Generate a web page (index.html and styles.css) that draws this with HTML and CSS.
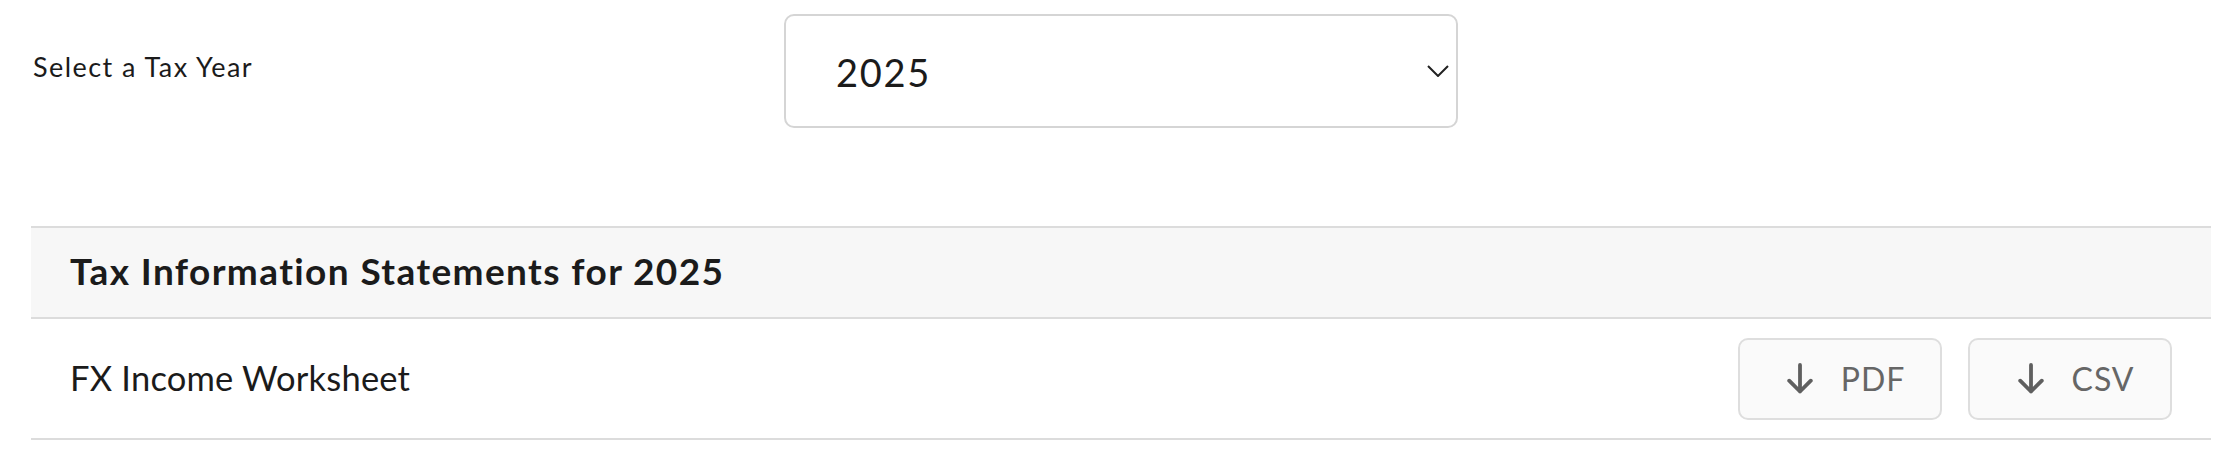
FILE: index.html
```html
<!DOCTYPE html>
<html>
<head>
<meta charset="utf-8">
<link rel="stylesheet" href="styles.css">
</head>
<body>
<div class="page">
  <div class="year-row">
    <div class="year-label">Select a Tax Year</div>
    <div class="select">
      <span class="select-value">2025</span>
      <svg class="chevron" width="22" height="12" viewBox="0 0 22 12"><path d="M1 1 L11 11 L21 1" fill="none" stroke="#222" stroke-width="2"/></svg>
    </div>
  </div>
  <div class="statements">
    <div class="statements-head">Tax Information Statements for 2025</div>
    <div class="statement-row">
      <div class="statement-name">FX Income Worksheet</div>
      <div class="actions">
        <button class="dl-btn"><svg class="dl-icon" width="26" height="31" viewBox="0 0 26 31"><path d="M13 2 V28.5 M2.2 17.7 L13 28.5 L23.8 17.7" fill="none" stroke="#5f5f5f" stroke-width="3.8" stroke-linecap="round" stroke-linejoin="round"/></svg><span>PDF</span></button>
        <button class="dl-btn"><svg class="dl-icon" width="26" height="31" viewBox="0 0 26 31"><path d="M13 2 V28.5 M2.2 17.7 L13 28.5 L23.8 17.7" fill="none" stroke="#5f5f5f" stroke-width="3.8" stroke-linecap="round" stroke-linejoin="round"/></svg><span>CSV</span></button>
      </div>
    </div>
  </div>
</div>
</body>
</html>
```

FILE: styles.css
```css
html, body {
  margin: 0;
  padding: 0;
  background: #ffffff;
}
body {
  font-family: "Lato", "Liberation Sans", sans-serif;
  color: #1b1b1b;
}
.page {
  padding: 14px 24px 0 31px;
}
.year-row {
  display: flex;
  align-items: flex-start;
}
.year-label {
  width: 751px;
  padding-left: 2px;
  padding-top: 39px;
  font-size: 27px;
  line-height: 27px;
  letter-spacing: 1.45px;
}
.select {
  box-sizing: border-box;
  width: 674px;
  height: 114px;
  border: 2px solid #d5d5d5;
  border-radius: 10px;
  display: flex;
  align-items: center;
  justify-content: space-between;
  padding: 0 7px 0 50px;
}
.select-value {
  font-size: 38px;
  line-height: 1;
  letter-spacing: 1.7px;
  padding-top: 1px;
}
.chevron {
  display: block;
}
.statements {
  margin-top: 98px;
}
.statements-head {
  box-sizing: border-box;
  height: 93px;
  background: #f7f7f7;
  border-top: 2px solid #dcdcdc;
  border-bottom: 2px solid #dcdcdc;
  display: flex;
  align-items: center;
  padding: 0 0 4px 39px;
  font-size: 37px;
  line-height: 1;
  font-weight: 700;
  letter-spacing: 1.4px;
}
.statement-row {
  box-sizing: border-box;
  height: 121px;
  border-bottom: 2px solid #dcdcdc;
  display: flex;
  align-items: center;
  justify-content: space-between;
  padding: 0 39px;
}
.statement-name {
  font-size: 34.5px;
  line-height: 1;
  letter-spacing: 0.2px;
}
.actions {
  display: flex;
  gap: 26px;
}
.dl-btn {
  box-sizing: border-box;
  width: 204px;
  height: 82px;
  border: 2px solid #dedede;
  border-radius: 10px;
  background: #fafafa;
  display: flex;
  align-items: center;
  justify-content: center;
  gap: 28px;
  font-family: "Lato", "Liberation Sans", sans-serif;
  font-size: 32px;
  letter-spacing: 1px;
  color: #666666;
  padding: 0 0 0 12px;
}
.dl-icon {
  display: block;
}
```
